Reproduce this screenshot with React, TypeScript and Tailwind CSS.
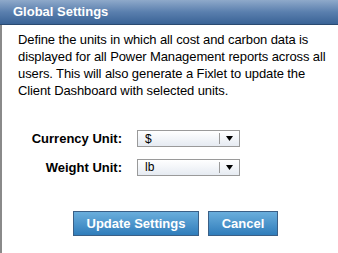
import React from "react";

function Select({ value }: { value: string }) {
  return (
    <div className="flex h-[17px] w-[103px] items-center border border-[#9a9a9a] bg-gradient-to-b from-[#ffffff] to-[#e6ebf2]">
      <span className="flex-1 pl-[7px] text-[12px] leading-none text-black">{value}</span>
      <span className="h-[11px] w-px bg-[#9a9a9a]" />
      <span className="flex w-[19px] items-center justify-center">
        <svg width="7" height="5" viewBox="0 0 7 5">
          <path d="M0 0 H7 L3.5 5 Z" fill="#000" />
        </svg>
      </span>
    </div>
  );
}

export default function App() {
  return (
    <div className="h-[253px] w-[338px] bg-white font-['Liberation_Sans',Arial,sans-serif]">
      <div className="flex h-[25px] items-center border-b border-[#2a4a70] bg-gradient-to-b from-[#8fa9ca] via-[#5a7fae] to-[#3a6396] pl-[13px] text-[13px] font-bold text-white">
        Global Settings
      </div>
      <div className="h-[228px] border-l-2 border-[#8a8a8a]">
        <p className="pl-[16px] pt-[6px] text-[13px] leading-[17px] tracking-[-0.1px] text-black">
          Define the units in which all cost and carbon data is displayed for all Power Management reports across all users. This will also generate a Fixlet to update the Client Dashboard with selected units.
        </p>
        <div className="mt-[30px] grid grid-cols-[120px_auto] items-center gap-x-[15px] gap-y-[9px]">
          <span className="text-right text-[13px] font-bold text-black">Currency Unit:</span>
          <Select value="$" />
          <span className="text-right text-[13px] font-bold text-black">Weight Unit:</span>
          <Select value="lb" />
        </div>
        <div className="mt-[34px] flex gap-[9px] pl-[71px]">
          <button className="h-[25px] w-[126px] border border-[#3a5f86] bg-gradient-to-b from-[#6aaedc] to-[#2f7dbb] text-[13px] font-bold text-white">
            Update Settings
          </button>
          <button className="h-[25px] w-[70px] border border-[#3a5f86] bg-gradient-to-b from-[#6aaedc] to-[#2f7dbb] text-[13px] font-bold text-white">
            Cancel
          </button>
        </div>
      </div>
    </div>
  );
}
